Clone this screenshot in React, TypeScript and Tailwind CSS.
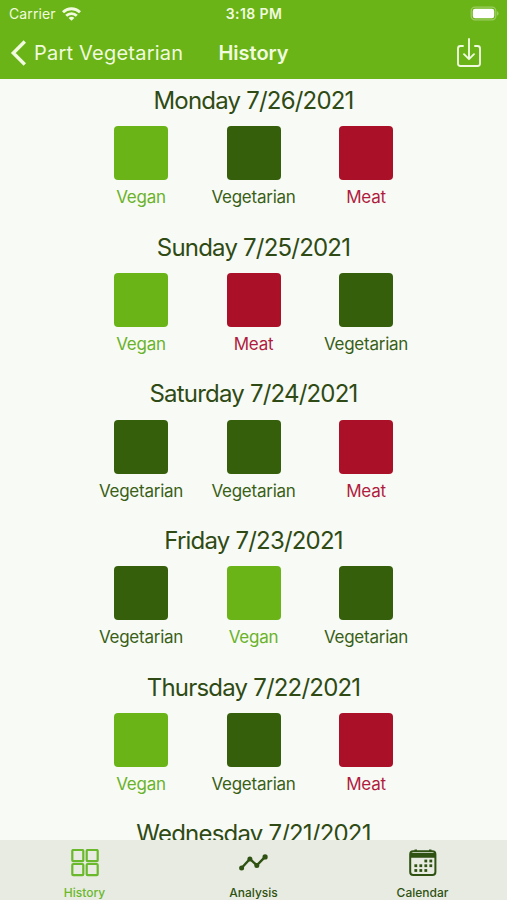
import { useState } from 'react';

type Meal = 'vegan' | 'vegetarian' | 'meat';
type Tab = 'history' | 'analysis' | 'calendar';

interface Day {
  label: string;
  meals: Meal[];
}

const DAYS: Day[] = [
  { label: 'Monday 7/26/2021', meals: ['vegan', 'vegetarian', 'meat'] },
  { label: 'Sunday 7/25/2021', meals: ['vegan', 'meat', 'vegetarian'] },
  { label: 'Saturday 7/24/2021', meals: ['vegetarian', 'vegetarian', 'meat'] },
  { label: 'Friday 7/23/2021', meals: ['vegetarian', 'vegan', 'vegetarian'] },
  { label: 'Thursday 7/22/2021', meals: ['vegan', 'vegetarian', 'meat'] },
  { label: 'Wednesday 7/21/2021', meals: ['vegetarian', 'vegan', 'meat'] },
];

const MEALS: Record<Meal, { name: string; box: string; text: string }> = {
  vegan: { name: 'Vegan', box: 'bg-[#6ab417]', text: 'text-[#6ab22a]' },
  vegetarian: { name: 'Vegetarian', box: 'bg-[#365f0c]', text: 'text-[#3a5f18]' },
  meat: { name: 'Meat', box: 'bg-[#ab1029]', text: 'text-[#b01c40]' },
};

function StatusBar() {
  return (
    <div className="grid h-[27px] grid-cols-[1fr_auto_1fr] items-center pr-[8px] pl-[9px] text-[14px]">
      <div className="flex items-center gap-[6px]">
        <span className="tracking-[0.1px]">Carrier</span>
        <svg width="19" height="14" viewBox="0 0 19 14" fill="none" stroke="currentColor" strokeWidth="2.8">
          <path d="M1 5.2a12.2 12.2 0 0 1 17 0" />
          <path d="M4.2 8.7a7.6 7.6 0 0 1 10.6 0" />
          <path d="M9.5 13.8 6.6 10.9a4 4 0 0 1 5.8 0z" fill="currentColor" stroke="none" />
        </svg>
      </div>
      <span className="text-center font-semibold tracking-[0.4px]">3:18 PM</span>
      <svg className="justify-self-end" width="29" height="15" viewBox="0 0 29 15">
        <rect x="1.2" y="1.2" width="24.6" height="12.6" rx="3.8" fill="none" stroke="#9ccd62" strokeWidth="1.3" />
        <rect x="2.8" y="2.8" width="21.4" height="9.4" rx="2.2" fill="#fff" />
        <path d="M27 5.3v4.4c1-.4 1.6-1.2 1.6-2.2s-.6-1.8-1.6-2.2z" fill="#9ccd62" />
      </svg>
    </div>
  );
}

function NavBar() {
  return (
    <div className="grid h-[52px] grid-cols-[1fr_auto_1fr] items-center">
      <button className="flex w-0 items-center gap-[7px] pl-[10px] text-[20px]">
        <svg className="shrink-0" width="17" height="26" viewBox="0 0 17 26" fill="none" stroke="currentColor" strokeWidth="3.4">
          <path d="M14.8 1.5 3.3 13l11.5 11.5" />
        </svg>
        <span className="whitespace-nowrap tracking-[0.22px]">Part Vegetarian</span>
      </button>
      <h1 className="text-[20px] font-semibold">History</h1>
      <button className="mr-[25px] justify-self-end" aria-label="Export">
        <svg width="26" height="30" viewBox="0 0 26 30" fill="none" stroke="currentColor" strokeWidth="1.9" strokeLinecap="round" strokeLinejoin="round">
          <path d="M7 8H4.5A2.5 2.5 0 0 0 2 10.5v15A2.5 2.5 0 0 0 4.5 28h17a2.5 2.5 0 0 0 2.5-2.5v-15A2.5 2.5 0 0 0 21.5 8H19" />
          <path d="M13 1v20M8 16.2l5 5 5-5" />
        </svg>
      </button>
    </div>
  );
}

function DaySection({ day }: { day: Day }) {
  return (
    <section className="h-[146.65px] shrink-0 pt-[6px]">
      <h2 className="text-center text-[24px] leading-[32px] tracking-[-0.8px] text-[#2f4a14]">{day.label}</h2>
      <div className="mt-[9.3px] flex justify-center">
        {day.meals.map((meal, i) => (
          <div key={i} className="flex w-[112.5px] flex-col items-center">
            <div className={`size-[54px] rounded-[4px] ${MEALS[meal].box}`} />
            <span className={`mt-[5px] text-[17px] leading-[24px] tracking-[-0.25px] ${MEALS[meal].text}`}>
              {MEALS[meal].name}
            </span>
          </div>
        ))}
      </div>
    </section>
  );
}

function GridIcon() {
  return (
    <svg width="28" height="28" viewBox="0 0 28 28" fill="none" stroke="currentColor" strokeWidth="2.2">
      <rect x="1.3" y="1" width="11" height="11.2" rx="1" />
      <rect x="15.7" y="1" width="11" height="11.2" rx="1" />
      <rect x="1.3" y="15" width="11" height="11.2" rx="1" />
      <rect x="15.7" y="15" width="11" height="11.2" rx="1" />
    </svg>
  );
}

function ChartIcon() {
  return (
    <svg width="30" height="28" viewBox="0 0 30 28" fill="currentColor">
      <path d="M2.6 19 10.9 9.9l6.9 6.5 8.3-8.5" fill="none" stroke="currentColor" strokeWidth="2.4" />
      <circle cx="2.6" cy="19" r="2.5" />
      <circle cx="10.9" cy="9.9" r="2.5" />
      <circle cx="17.8" cy="16.4" r="2.5" />
      <circle cx="26.1" cy="7.9" r="2.6" />
    </svg>
  );
}

function CalendarIcon() {
  const dots = [[15, 10.6], [20, 10.6], [5, 15.3], [10, 15.3], [15, 15.3], [20, 15.3], [5, 20.1], [10, 20.1], [15, 20.1]];
  return (
    <svg width="28" height="28" viewBox="0 0 28 28" fill="currentColor">
      <rect x="1.2" y="2.2" width="25.2" height="23.8" rx="3" fill="none" stroke="currentColor" strokeWidth="2" />
      <path d="M2 4h24v4.8H2zM5.5.4H8v2H5.500zM20 .4h2.500v2H20z" />
      {dots.map(([x, y]) => (
        <rect key={`${x}-${y}`} x={x + 0.4} y={y} width="2.8" height="2.8" />
      ))}
    </svg>
  );
}

const TABS = [
  { id: 'history' as Tab, label: 'History', Icon: GridIcon },
  { id: 'analysis' as Tab, label: 'Analysis', Icon: ChartIcon },
  { id: 'calendar' as Tab, label: 'Calendar', Icon: CalendarIcon },
];

export default function App() {
  const [tab, setTab] = useState<Tab>('history');

  return (
    <div className="flex h-[900px] w-[507px] flex-col overflow-hidden bg-[#f8fbf5] font-['Inter',sans-serif]">
      <header className="h-[79px] shrink-0 bg-[#6ab417] text-[#f1fadf]">
        <StatusBar />
        <NavBar />
      </header>

      <main className="flex min-h-0 flex-1 flex-col overflow-hidden">
        {DAYS.map((day) => (
          <DaySection key={day.label} day={day} />
        ))}
      </main>

      <nav className="grid h-[60px] shrink-0 grid-cols-3 bg-[#e7ebe1]">
        {TABS.map(({ id, label, Icon }) => (
          <button
            key={id}
            onClick={() => setTab(id)}
            className={`flex flex-col items-center pt-[9px] ${tab === id ? 'text-[#6ab82c]' : 'text-[#2f5212]'}`}
          >
            <Icon />
            <span className="mt-[9px] text-[12px] leading-[14px] font-medium">{label}</span>
          </button>
        ))}
      </nav>
    </div>
  );
}
